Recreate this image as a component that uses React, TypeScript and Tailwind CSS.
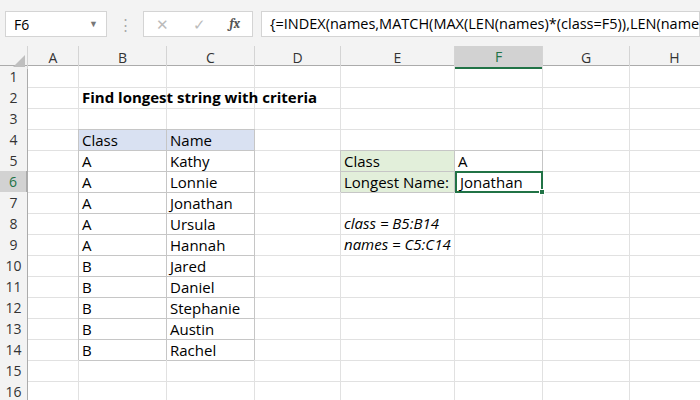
const cols = ['A', 'B', 'C', 'D', 'E', 'F', 'G', 'H'];
const widths = [51, 88, 88, 86, 114, 88, 87, 90];
const tmpl = 'grid-cols-[28px_51px_88px_88px_86px_114px_88px_87px_90px]';

type Cell = { t?: string; cls?: string };

const names: [string, string][] = [
  ['A', 'Kathy'], ['A', 'Lonnie'], ['A', 'Jonathan'], ['A', 'Ursula'], ['A', 'Hannah'],
  ['B', 'Jared'], ['B', 'Daniel'], ['B', 'Stephanie'], ['B', 'Austin'], ['B', 'Rachel'],
];

function cellsFor(r: number): Record<number, Cell> {
  const m: Record<number, Cell> = {};
  const tb = 'border border-[#c6c6c6] -ml-px';
  if (r === 2) m[1] = { t: 'Find longest string with criteria', cls: 'font-bold overflow-visible whitespace-nowrap' };
  if (r === 4) {
    m[1] = { t: 'Class', cls: `bg-[#d9e1f2] ${tb}` };
    m[2] = { t: 'Name', cls: `bg-[#d9e1f2] ${tb}` };
  }
  if (r >= 5 && r <= 14) {
    m[1] = { t: names[r - 5][0], cls: tb };
    m[2] = { t: names[r - 5][1], cls: tb };
  }
  if (r === 5) {
    m[4] = { t: 'Class', cls: `bg-[#e2efda] ${tb}` };
    m[5] = { t: 'A', cls: tb };
  }
  if (r === 6) {
    m[4] = { t: 'Longest Name:', cls: `bg-[#e2efda] ${tb}` };
    m[5] = { t: 'Jonathan', cls: 'border-2 border-[#217346] relative' };
  }
  if (r === 8) m[4] = { t: 'class = B5:B14', cls: 'italic whitespace-nowrap' };
  if (r === 9) m[4] = { t: 'names = C5:C14', cls: 'italic whitespace-nowrap' };
  return m;
}

export default function App() {
  return (
    <div className="w-[700px] h-[400px] overflow-hidden bg-white text-[15px] text-black" style={{ fontFamily: '"Open Sans", "Liberation Sans", sans-serif' }}>
      <div className="h-[46px] bg-[#f3f3f3] flex items-center gap-2 pl-[5px] pt-[2px]">
        <div className="w-[102px] h-[26px] bg-white border border-[#d4d4d4] flex items-center justify-between px-2 text-[14px]">
          <span>F6</span><span className="text-[#777] text-[9px]">▼</span>
        </div>
        <div className="text-[#aaa] w-[20px] text-center leading-none">⋮</div>
        <div className="w-[110px] h-[26px] bg-white border border-[#d4d4d4] flex items-center justify-around text-[#bbb]">
          <span>✕</span><span>✓</span><span className="italic text-[#555] font-serif font-bold text-[13px]">fx</span>
        </div>
        <div className="flex-1 h-[26px] bg-white border border-[#d4d4d4] flex items-center px-2 whitespace-nowrap overflow-hidden text-[14.5px]">
          {'{=INDEX(names,MATCH(MAX(LEN(names)*(class=F5)),LEN(names)*(class=F5),0))}'}
        </div>
      </div>
      <div className={`grid ${tmpl} h-[20px] bg-[#f3f3f3] border-b border-[#ababab] text-[#333] text-[14px]`}>
        <div className="border-r border-[#d4d4d4] relative overflow-hidden">
          <div className="absolute right-[2px] bottom-[2px] w-0 h-0 border-l-[12px] border-l-transparent border-b-[12px] border-b-[#bfbfbf]" />
        </div>
        {cols.map(c => (
          <div key={c} className={`flex items-center justify-center border-r border-[#d4d4d4] ${c === 'F' ? 'bg-[#d2d2d2] border-b-2 border-b-[#217346] text-[#217346]' : ''}`}>{c}</div>
        ))}
      </div>
      {Array.from({ length: 16 }, (_, i) => i + 1).map(r => {
        const m = cellsFor(r);
        return (
          <div key={r} className={`grid ${tmpl} h-[21px]`}>
            <div className={`flex items-center justify-center text-[14px] text-[#333] border-b border-[#d4d4d4] border-r border-r-[#ababab] ${r === 6 ? 'bg-[#d2d2d2] border-r-2 border-r-[#217346] text-[#217346]' : 'bg-[#f3f3f3]'}`}>{r}</div>
            {widths.map((_, ci) => {
              const c = m[ci];
              return (
                <div key={ci} className={`flex items-center px-[3px] leading-none ${c?.cls ?? 'border-b border-r border-[#e1e1e1]'} ${c?.cls?.includes('overflow-visible') || c?.cls?.includes('whitespace') ? 'border-b border-r border-[#e1e1e1] relative z-10' : ''}`}>
                  {c?.t}
                  {r === 6 && ci === 5 && <div className="absolute -right-[4px] -bottom-[4px] w-[6px] h-[6px] bg-[#217346] border border-white" />}
                </div>
              );
            })}
          </div>
        );
      })}
    </div>
  );
}
